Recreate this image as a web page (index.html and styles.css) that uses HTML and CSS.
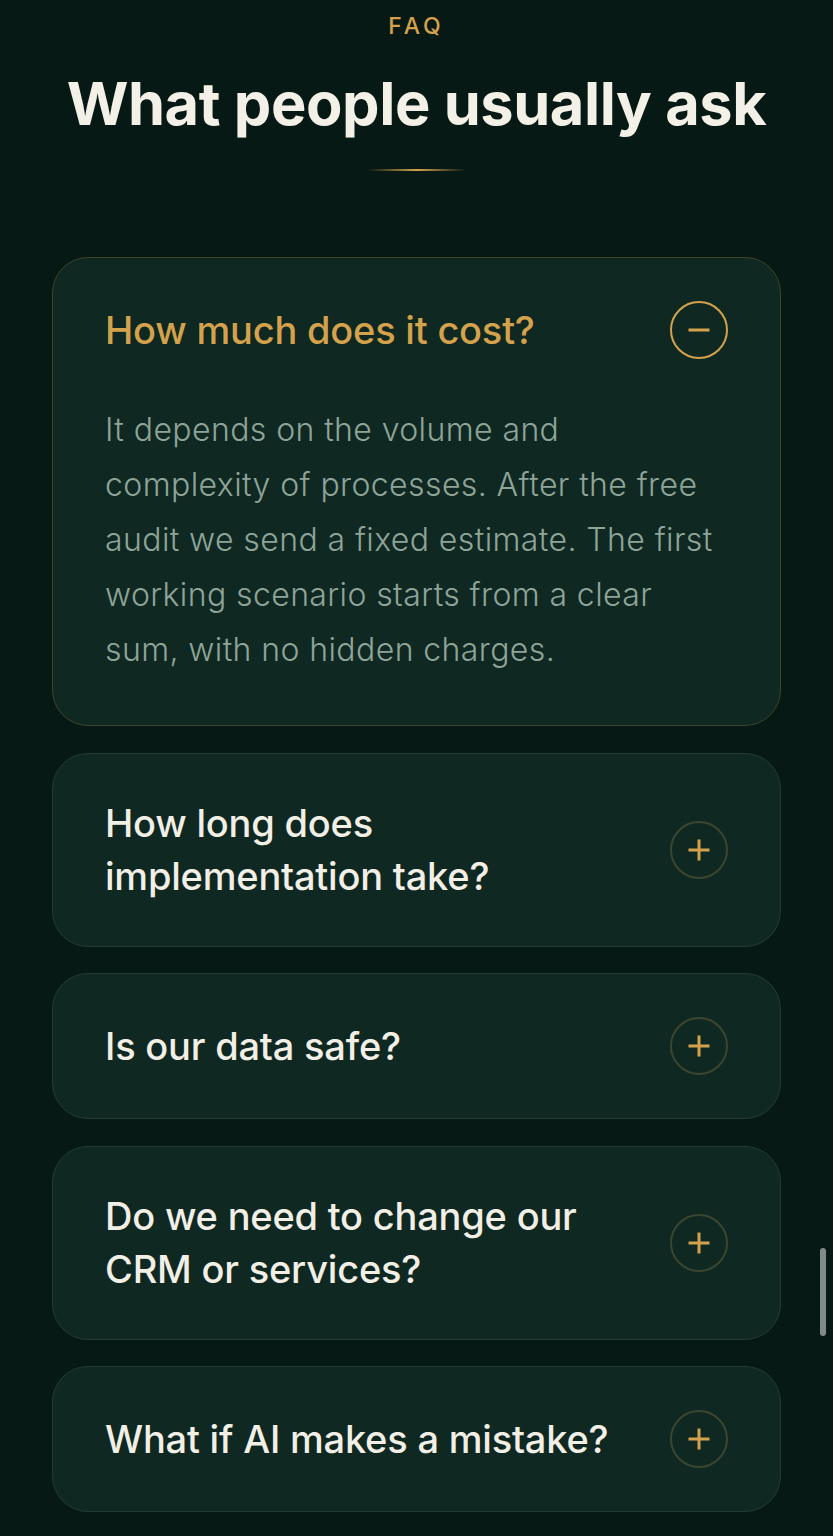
FILE: index.html
```html
<!DOCTYPE html>
<html lang="en">
<head>
<meta charset="utf-8">
<title>FAQ</title>
<link rel="stylesheet" href="styles.css">
</head>
<body>
<main class="faq">
  <p class="eyebrow">FAQ</p>
  <h2 class="title">What people usually ask</h2>
  <div class="rule"></div>
  <div class="list">
    <div class="item open">
      <div class="q-row">
        <h3 class="q">How much does it cost?</h3>
        <span class="toggle">
          <svg viewBox="0 0 58 58" width="58" height="58"><circle cx="29" cy="29" r="28" fill="none" stroke="currentColor" stroke-width="2"/><path d="M18.5 29h21" stroke="currentColor" stroke-width="3"/></svg>
        </span>
      </div>
      <p class="a">It depends on the volume and complexity of processes. After the free audit we send a fixed estimate. The first working scenario starts from a clear sum, with no hidden charges.</p>
    </div>
    <div class="item">
      <div class="q-row">
        <h3 class="q">How long does implementation take?</h3>
        <span class="toggle">
          <svg viewBox="0 0 58 58" width="58" height="58"><circle class="ring" cx="29" cy="29" r="28" fill="none" stroke-width="2"/><path d="M18.5 29h21M29 18.5v21" stroke="currentColor" stroke-width="3"/></svg>
        </span>
      </div>
    </div>
    <div class="item">
      <div class="q-row">
        <h3 class="q">Is our data safe?</h3>
        <span class="toggle">
          <svg viewBox="0 0 58 58" width="58" height="58"><circle class="ring" cx="29" cy="29" r="28" fill="none" stroke-width="2"/><path d="M18.5 29h21M29 18.5v21" stroke="currentColor" stroke-width="3"/></svg>
        </span>
      </div>
    </div>
    <div class="item">
      <div class="q-row">
        <h3 class="q">Do we need to change our CRM or services?</h3>
        <span class="toggle">
          <svg viewBox="0 0 58 58" width="58" height="58"><circle class="ring" cx="29" cy="29" r="28" fill="none" stroke-width="2"/><path d="M18.5 29h21M29 18.5v21" stroke="currentColor" stroke-width="3"/></svg>
        </span>
      </div>
    </div>
    <div class="item">
      <div class="q-row">
        <h3 class="q">What if AI makes a mistake?</h3>
        <span class="toggle">
          <svg viewBox="0 0 58 58" width="58" height="58"><circle class="ring" cx="29" cy="29" r="28" fill="none" stroke-width="2"/><path d="M18.5 29h21M29 18.5v21" stroke="currentColor" stroke-width="3"/></svg>
        </span>
      </div>
    </div>
  </div>
</main>
<div class="scrollbar"></div>
</body>
</html>
```
FILE: styles.css
```css
html, body {
  margin: 0;
  padding: 0;
  background: #071914;
}
body {
  font-family: Inter, "Noto Sans", "Liberation Sans", sans-serif;
  color: #f2efe6;
  overflow: hidden;
  height: 1536px;
}
.faq {
  padding: 12px 52px 40px;
  display: flex;
  flex-direction: column;
  align-items: center;
}
.eyebrow {
  margin: 0;
  font-size: 23px;
  line-height: 28px;
  font-weight: 500;
  letter-spacing: 4px;
  color: #d4a24c;
}
.title {
  margin: 28px 0 0;
  font-size: 59.5px;
  line-height: 70px;
  font-weight: 700;
  letter-spacing: -0.4px;
  color: #f3f0e7;
  text-align: center;
}
.rule {
  width: 98px;
  height: 2px;
  margin-top: 31px;
  background: linear-gradient(90deg, rgba(212,162,76,0), #d4a24c 50%, rgba(212,162,76,0));
}
.list {
  align-self: stretch;
  margin-top: 86px;
  display: flex;
  flex-direction: column;
  gap: 26.5px;
}
.item {
  background: #0f2822;
  border: 1.5px solid #223c34;
  border-radius: 36px;
  padding: 43px 52px 43px 52px;
}
.item.open {
  border-color: #3d452b;
  padding-bottom: 48px;
}
.q-row {
  display: flex;
  align-items: center;
  justify-content: space-between;
  gap: 40px;
}
.q {
  margin: 0;
  font-size: 38px;
  line-height: 53px;
  font-weight: 500;
  letter-spacing: -0.2px;
  color: #f2efe6;
}
.open .q {
  color: #d4a24c;
}
.toggle {
  flex: none;
  width: 58px;
  height: 58px;
  color: #d4a24c;
  display: block;
}
.toggle svg {
  display: block;
}
.ring {
  stroke: #3b4630;
}
.a {
  margin: 43px 0 0;
  font-size: 32px;
  line-height: 55px;
  font-weight: 300;
  color: #8ea498;
  letter-spacing: 0.4px;
}
.scrollbar {
  position: fixed;
  right: 7px;
  top: 1248px;
  width: 6px;
  height: 88px;
  border-radius: 3px;
  background: #7f8c87;
}
```
